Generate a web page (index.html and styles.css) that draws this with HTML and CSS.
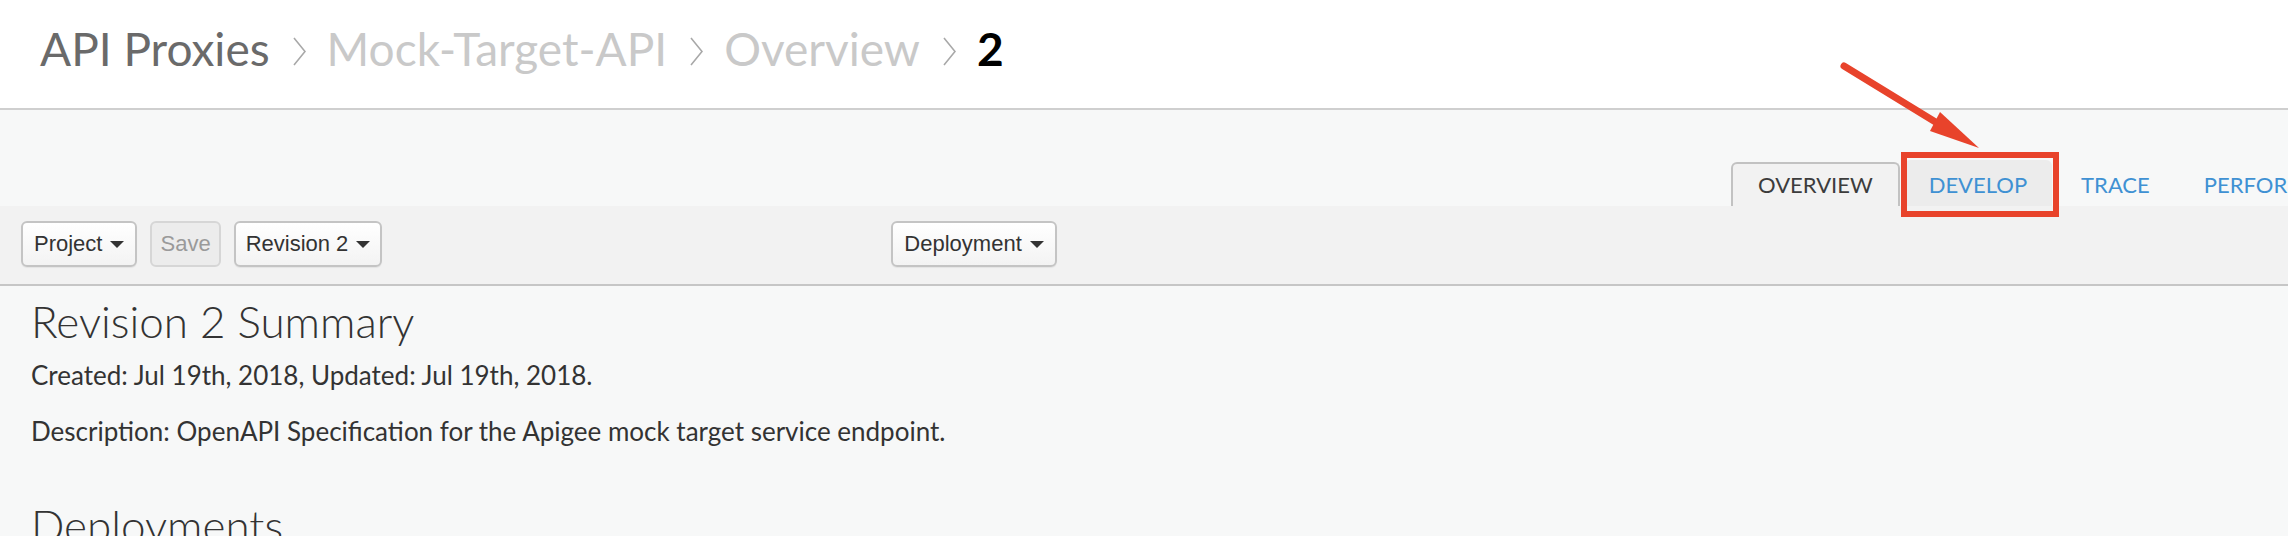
FILE: index.html
```html
<!DOCTYPE html>
<html>
<head>
<meta charset="utf-8">
<title>API Proxies - Mock-Target-API</title>
<link rel="stylesheet" href="styles.css">
</head>
<body>
<header class="page-header">
  <nav class="crumbs">
    <span class="crumb crumb-root">API Proxies</span>
    <svg class="chev" viewBox="0 0 13 29"><polyline points="1,1 12,14.5 1,28"/></svg>
    <span class="crumb crumb-muted">Mock-Target-API</span>
    <svg class="chev" viewBox="0 0 13 29"><polyline points="1,1 12,14.5 1,28"/></svg>
    <span class="crumb crumb-muted">Overview</span>
    <svg class="chev" viewBox="0 0 13 29"><polyline points="1,1 12,14.5 1,28"/></svg>
    <span class="crumb crumb-current">2</span>
  </nav>
</header>

<section class="tabbar">
  <ul class="tabs">
    <li class="tab tab-active">OVERVIEW</li>
    <li class="tab tab-hover">DEVELOP</li>
    <li class="tab">TRACE</li>
    <li class="tab">PERFORMANCE</li>
  </ul>
</section>

<div class="toolbar">
  <button class="btn">Project<span class="caret"></span></button>
  <button class="btn btn-disabled">Save</button>
  <button class="btn btn-rev">Revision 2<span class="caret"></span></button>
  <button class="btn btn-deploy">Deployment<span class="caret"></span></button>
</div>

<main class="content">
  <h2 class="section-title">Revision 2 Summary</h2>
  <p class="meta">Created: Jul 19th, 2018, Updated: Jul 19th, 2018.</p>
  <p class="meta meta-desc">Description: OpenAPI Specification for the Apigee mock target service endpoint.</p>
  <h2 class="section-title section-deploy">Deployments</h2>
</main>

<div class="annotation">
  <svg class="arrow" viewBox="0 0 2288 536" width="2288" height="536">
    <line x1="1844" y1="66" x2="1942" y2="126"/>
    <polygon points="1979,148 1940,112 1930,131"/>
  </svg>
  <div class="highlight"></div>
</div>
</body>
</html>
```

FILE: styles.css
```css
html, body {
  margin: 0;
  padding: 0;
  overflow: hidden;
}
body {
  width: 2288px;
  height: 536px;
  position: relative;
  background: #f7f8f8;
  font-family: Lato, "Open Sans", sans-serif;
  color: #333;
}

/* ---------- header / breadcrumbs ---------- */
.page-header {
  box-sizing: border-box;
  height: 110px;
  background: #fff;
  border-bottom: 2px solid #cfcfcf;
  padding: 22px 0 0 40px;
}
.crumbs {
  display: flex;
  align-items: center;
  font-size: 46px;
  line-height: 54px;
}
.crumb-root { color: #6a6a6a; }
.crumb-muted { color: #c9c9c9; }
.crumb-current { color: #000; font-weight: 700; }
.chev {
  width: 13px;
  height: 29px;
  margin: 4px 21px 0 23px;
  fill: none;
  stroke: #a8a8a8;
  stroke-width: 1.6;
}

/* ---------- tabs ---------- */
.tabbar {
  box-sizing: border-box;
  height: 98px;
  background: #f7f8f8;
  border-bottom: 2px solid #c4c4c4;
  overflow: hidden;
}
.tabs {
  list-style: none;
  margin: 0;
  padding: 52px 0 0 1731px;
  display: flex;
  gap: 4px;
  white-space: nowrap;
}
.tab {
  box-sizing: border-box;
  height: 46px;
  padding: 8px 23px 0;
  font-size: 22px;
  line-height: 26px;
  color: #3f91d3;
  border: 2px solid transparent;
  border-bottom: none;
  border-radius: 6px 6px 0 0;
}
.tab-active {
  color: #3c3c3c;
  background: #f2f2f2;
  border-color: #c2c2c2;
  position: relative;
  z-index: 1;
  height: 48px;
  padding: 8px 25px 0;
}
.tab-hover {
  background: #ececec;
  border-bottom: 2px solid #dcdcdc;
  margin-top: -2px;
  height: 48px;
  padding-top: 10px;
}

/* ---------- toolbar ---------- */
.toolbar {
  box-sizing: border-box;
  height: 80px;
  margin-top: -2px;
  background: #f2f2f2;
  border-bottom: 2px solid #c6c6c6;
  padding: 15px 0 0 21px;
  display: flex;
  align-items: flex-start;
  gap: 13px;
}
.btn {
  box-sizing: border-box;
  height: 46px;
  display: inline-flex;
  align-items: center;
  padding: 0 11px;
  font-family: "Liberation Sans", Arial, sans-serif;
  font-size: 22px;
  color: #333;
  background: linear-gradient(#ffffff, #f3f3f3);
  border: 2px solid #c4c4c4;
  border-radius: 6px;
  box-shadow: 0 1px 1px rgba(0,0,0,0.06);
}
.btn-disabled {
  padding: 0 8px;
  color: #9a9a9a;
  background: #ececec;
  border-color: #d6d6d6;
  box-shadow: none;
}
.btn-rev {
  padding: 0 10px;
}
.btn-deploy {
  margin-left: 496px;
}
.caret {
  display: inline-block;
  width: 0;
  height: 0;
  margin-left: 8px;
  border-left: 7px solid transparent;
  border-right: 7px solid transparent;
  border-top: 7px solid #333;
}

/* ---------- content ---------- */
.content {
  padding: 9px 0 0 31px;
}
.section-title {
  margin: 0;
  font-size: 44px;
  font-weight: 300;
  line-height: 53px;
  color: #333;
}
.meta {
  margin: 12px 0 0;
  font-size: 26px;
  line-height: 31px;
  color: #333;
}
.meta-desc {
  margin-top: 25px;
}
.section-deploy {
  margin-top: 52px;
}

/* ---------- annotation overlay ---------- */
.annotation {
  position: absolute;
  left: 0;
  top: 0;
  width: 2288px;
  height: 536px;
  pointer-events: none;
}
.arrow {
  position: absolute;
  left: 0;
  top: 0;
}
.arrow line {
  stroke: #e8432b;
  stroke-width: 7;
  stroke-linecap: round;
}
.arrow polygon {
  fill: #e8432b;
}
.highlight {
  position: absolute;
  left: 1901px;
  top: 152px;
  width: 158px;
  height: 65px;
  box-sizing: border-box;
  border: 6px solid #e8432b;
}
```
